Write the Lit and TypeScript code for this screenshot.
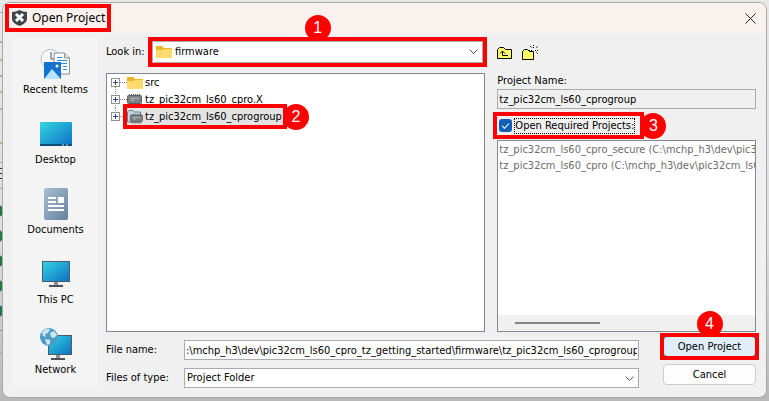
import { LitElement, html, css, svg } from "lit";
import { customElement } from "lit/decorators.js";

const folder = html`<svg class="ic16" viewBox="0 0 16 14"><path d="M0 2Q0 1 1 1H6L8 3H15Q16 3 16 4V6H0Z" fill="#f0b323"/><path d="M0 5H6L8 4H16V12Q16 13 15 13H1Q0 13 0 12Z" fill="#ffdb6e"/></svg>`;
const chipShape = svg`<path d="M2.500 1V3M4.500 1V3M6.500 1V3M8.500 1V3M10.500 1V3M12.500 1V3M2.500 10V13M4.500 10V13M6.500 10V13M8.500 10V13M10.500 10V13M12.500 10V13" stroke="#6a6a6a" stroke-width="1"/><rect x="0.5" y="2.500" width="14" height="8" rx="1" fill="#7d8082" stroke="#5c5f61"/><path d="M3 5.500H12M4 7.500H7" stroke="#b5b8ba"/>`;
const chip = html`<svg class="ic16" viewBox="0 0 16 14">${chipShape}</svg>`;
const group = html`<svg class="ic16" viewBox="0 0 16 14"><path d="M.5 12V2L2 .5H6L7 2H13.500V12Z" fill="#c3d7e4" stroke="#667f91"/><g transform="translate(3 3) scale(.86 .82)">${chipShape}</g></svg>`;
const screen = svg`<defs><linearGradient id="g" x2="1" y2="1"><stop stop-color="#35d5e2"/><stop offset="1" stop-color="#0c6fc5"/></linearGradient></defs>`;

const places = [
  { name: "Recent Items", icon: html`<svg class="place-icon" viewBox="0 0 32 32"><circle cx="10.500" cy="11" r="9.500" fill="#f7f7f7" stroke="#b9bec2"/><path d="M11 4V11H17" fill="none" stroke="#555"/><path d="M14 5H24.500L29.500 10V26H14Z" fill="#fafafa" stroke="#8b9197"/><path d="M24.500 5V10H29.500" fill="#ddd" stroke="#8b9197"/><path d="M17 9.500H22M17 12.500H27M21 15.500H27M23 18.500H27M23 21.500H27" stroke="#2f8ed5"/><path d="M4 14H21V31H4Z" fill="#1473cf"/><path d="M4 31L12 21L21 31Z" fill="#b9e3fc"/><circle cx="17" cy="18" r="1.500" fill="#fff"/></svg>` },
  { name: "Desktop", icon: html`<svg class="place-icon" viewBox="0 0 32 32">${screen}<rect y="4" width="32" height="24" rx="1" fill="url(#g)"/><path d="M0 26H32V27Q32 28 31 28H1Q0 28 0 27Z" fill="#0c4c78"/><path d="M22 27H24M26 27H28" stroke="#c5e7f5"/></svg>` },
  { name: "Documents", icon: html`<svg class="place-icon" viewBox="0 0 32 32"><defs><linearGradient id="d" x2="1" y2="1"><stop stop-color="#a9bfd4"/><stop offset="1" stop-color="#6382a0"/></linearGradient></defs><rect x="4" width="24" height="32" rx="2" fill="url(#d)"/><path d="M8 10H16M8 14H16M8 18H24M8 22H24" stroke="#fff" stroke-width="2"/><path d="M18 9H24V15H18Z" fill="#fff"/></svg>` },
  { name: "This PC", icon: html`<svg class="place-icon" viewBox="0 0 32 32">${screen}<rect x="2.500" y="3.500" width="27" height="20" fill="url(#g)" stroke="#4c5b66"/><path d="M14 24H18V28H14Z" fill="#8a9197"/><path d="M9 28H23" stroke="#4c5358" stroke-width="2"/></svg>` },
  { name: "Network", icon: html`<svg class="place-icon" viewBox="0 0 32 32">${screen}<rect x="8.500" y="7.500" width="23" height="19" fill="url(#g)" stroke="#4c5b66"/><path d="M16 27H20V30H16Z" fill="#8a9197"/><path d="M11 31H25" stroke="#4c5358" stroke-width="2"/><circle cx="9" cy="9" r="9" fill="#4b9cc6"/><path d="M2 4Q6 0 10 1L8 5L5 6L6 9L3 8ZM10 5L14 3L17 7L14 10L11 9ZM5 11L10 12L10 16L7 17Z" fill="#cfe5ef"/></svg>` },
];

@customElement("app-root")
export class AppRoot extends LitElement {
  static styles = css`
    :host { display: flex; min-height: 100vh; box-sizing: border-box; padding: 2px 2px 3px; position: relative; overflow: hidden; background: linear-gradient(#e8e8e8, #dedede 60%, #b8b8b8); color: #000; font: 11px/14px "DejaVu Sans Condensed", "Noto Sans", sans-serif; }
    * { box-sizing: border-box; }
    svg { display: block; flex: none; }
    button, input, select { font: inherit; color: inherit; margin: 0; }
    .backdrop { position: absolute; inset: 0; width: 100%; height: 100%; }
    .dialog { position: relative; flex: 1; min-width: 0; display: flex; flex-direction: column; border: 1px solid #a9a9a9; border-radius: 8px; background: #f0f0f0; }
    .title { display: flex; justify-content: space-between; align-items: center; height: 30px; padding: 0 10px 0 6px; background: #f9f1ee; border-radius: 8px 8px 0 0; }
    .brand { position: relative; display: flex; align-items: center; gap: 4px; height: 20px; padding: 0 2px; }
    h1 { margin: 0; font: 12px/16px "Noto Sans", sans-serif; }
    .close { border: 0; padding: 0; background: none; }
    .body { flex: 1; display: flex; gap: 8px; padding: 4px 10px 9px; min-width: 0; }
    .places { flex: none; width: 85px; background: #f4f4f4; padding-top: 11px; display: flex; flex-direction: column; gap: 16px; }
    .place { border: 0; padding: 0; background: none; display: flex; flex-direction: column; align-items: center; gap: 3px; height: 54px; }
    .place-icon { width: 32px; height: 32px; }
    .main { flex: 1; min-width: 0; display: flex; flex-direction: column; gap: 4px; }
    .top { flex: 1; display: grid; grid-template-columns: minmax(0, 22fr) minmax(0, 15fr); gap: 12px; }
    .left, .right { display: flex; flex-direction: column; min-width: 0; }
    .look { display: flex; align-items: center; height: 30px; margin-bottom: 6px; padding-right: 2px; }
    .look label { width: 46px; }
    .combo { position: relative; flex: 1; display: flex; min-width: 0; }
    select { appearance: none; width: 100%; height: 22px; border: 1px solid #a9abb0; border-radius: 0; background: #fff; padding: 0 2px; }
    .look select { padding-left: 22px; }
    .combo .ic16, .chev { position: absolute; }
    .combo .ic16 { left: 4px; top: 4px; }
    .chev { right: 5px; top: 8px; }
    .ic16 { width: 16px; height: 14px; }
    .mark { position: absolute; inset: -4px; border: 4px solid #f00; pointer-events: none; }
    .num { position: absolute; width: 26px; height: 26px; border-radius: 50%; background: #f00; color: #fff; display: grid; place-items: center; font: 16px/20px "Liberation Sans", sans-serif; }
    .above { left: 50%; bottom: 100%; margin-left: -13px; }
    .after { left: 100%; top: 50%; margin-top: -13px; }
    .tree { flex: 1; margin: 0; list-style: none; border: 1px solid #828790; background: #fff; padding: 0 4px; }
    .node { display: flex; align-items: center; height: 17px; }
    .item { position: relative; display: flex; align-items: center; gap: 2px; height: 17px; padding-right: 1px; }
    .selected { background: #e3e3e3; }
    .tools { display: flex; gap: 9px; align-items: center; height: 32px; margin-bottom: 5px; }
    .tools button { border: 0; padding: 0; background: none; }
    .field { height: 20px; border: 1px solid #a9abb0; background: #fff; padding: 0 1px; min-width: 0; border-radius: 0; }
    .name { width: 100%; background: #f0f0f0; margin: 1px 0 7px; }
    .check { position: relative; align-self: flex-start; display: flex; align-items: center; gap: 3px; height: 19px; padding: 0 6px 0 2px; margin-bottom: 5px; }
    .check input { appearance: none; width: 13px; height: 13px; border-radius: 3px; background: #0f5fb8; display: grid; place-items: center; }
    .check input::after { content: ""; width: 6px; height: 3px; border: solid #fff; border-width: 0 0 1px 1px; transform: rotate(-45deg); margin-top: -2px; }
    .check label { outline: 1px dotted #000; }
    .required { flex: 1; display: flex; flex-direction: column; border: 1px solid #828790; background: #fff; overflow: hidden; color: #6d6d6d; white-space: nowrap; }
    .required ul { flex: 1; list-style: none; margin: 0; padding: 1px; line-height: 16px; }
    .track { height: 16px; background: #f0f0f0; padding: 7px 17px; }
    .thumb { width: 38%; height: 2px; background: #858585; }
    .bottom { display: grid; grid-template-columns: 78px minmax(0, 1fr) 93px; grid-auto-rows: 24px; row-gap: 4px; align-items: end; }
    .bottom label { line-height: 20px; }
    .bottom .combo, .bottom .field { margin-right: 24px; }
    .bottom select { height: 20px; }
    .push { position: relative; align-self: start; height: 21px; border: 1px solid #ccc; border-radius: 4px; background: #fdfdfd; padding: 0; }
    .primary { background: #e0eef9; border-color: #0078d4; }
  `;

  render() {
    const chev = html`<svg class="chev" width="9" height="6" viewBox="0 0 9 6"><path d="M.5 .5L4.500 4.500L8.500 .5" fill="none" stroke="#555"/></svg>`;
    return html`
      <svg class="backdrop" aria-hidden="true"><path d="M0 12.500H4M0 162.500H4M0 188.500H4" stroke="#aaa"/><path d="M0 168.500H3M0 173.500H3M0 178.500H3" stroke="#333"/><path d="M0 330.500H4M0 353.500H4" stroke="#7f9db9"/><path d="M0 42H2M0 76H2M0 109H2" stroke="#777"/><path d="M0 60H2M0 92H2M0 143H2" stroke="#b87a3a"/>${[211, 236, 261, 286, 311].map((y) => svg`<circle cx="-3" cy=${y} r="6" fill="#188038" stroke="#24486b"/>`)}</svg>
      <main class="dialog">
        <header class="title">
          <div class="brand"><svg width="17" height="16" viewBox="0 0 17 16"><path d="M1 2Q5 2 8.500 0Q12 2 16 2V9Q16 13 8.500 16Q1 13 1 9Z" fill="#3d464d"/><path d="M5 4L12 11M12 4L5 11" stroke="#fff" stroke-width="3"/></svg><h1>Open Project</h1><span class="mark"></span></div>
          <button class="close" aria-label="Close"><svg width="11" height="11" viewBox="0 0 11 11"><path d="M.5 .5L10.500 10.500M10.500 .5L.5 10.500" stroke="#222"/></svg></button>
        </header>
        <div class="body">
          <nav class="places">${places.map((p) => html`<button class="place">${p.icon}<span>${p.name}</span></button>`)}</nav>
          <div class="main">
            <div class="top">
              <section class="left">
                <div class="look"><label for="look">Look in:</label><div class="combo"><select id="look"><option>firmware</option></select>${folder}${chev}<span class="mark"><span class="num above">1</span></span></div></div>
                <ul class="tree">
                  ${[["src", folder], ["tz_pic32cm_ls60_cpro.X", chip], ["tz_pic32cm_ls60_cprogroup", group]].map(([t, i], n) => html`<li class="node"><svg width="16" height="17" viewBox="0 0 16 17"><path d="${["M4.500 13V17", "M4.500 0V17", "M4.500 0V4"][n]}M9 8.500H16" stroke="#888" stroke-dasharray="1 1"/><rect x=".5" y="4.500" width="8" height="8" fill="#fff" stroke="#919191"/><path d="M2 8.500H7M4.500 6V11" stroke="#27468f"/></svg><span class="item ${n === 2 ? "selected" : ""}">${i}<span>${t}</span>${n === 2 ? html`<span class="mark"><span class="num after">2</span></span>` : ""}</span></li>`)}
                </ul>
              </section>
              <section class="right">
                <div class="tools"><button aria-label="Up one level"><svg width="16" height="14" viewBox="0 0 16 14"><path d="M.5 12.500V3.500L2.500 1.500H6.500L8.500 3.500H14.500V12.500Z" fill="#ffff66" stroke="#000"/><path d="M5.500 5V9.500H11M3 7.500L5.500 5L8 7.500" fill="none" stroke="#000"/></svg></button><button aria-label="New folder"><svg width="16" height="16" viewBox="0 0 16 16"><path d="M.5 14.500V6.500L2.500 4.500H5.500L7.500 6.500H11.500V14.500Z" fill="#ffff66" stroke="#000"/><path d="M11.500 0V3M11.500 7V10M7 5.500H10M13 5.500H16M8 1L10 3M14 3L16 1M14 7L16 9" stroke="#000" stroke-dasharray="1 1"/></svg></button></div>
                <label for="pname">Project Name:</label>
                <input id="pname" class="field name" readonly value="tz_pic32cm_ls60_cprogroup">
                <div class="check"><input id="req" type="checkbox" checked><label for="req">Open Required Projects:</label><span class="mark"><span class="num after">3</span></span></div>
                <div class="required"><ul><li>tz_pic32cm_ls60_cpro_secure (C:\\mchp_h3\\dev\\pic32cm_ls60_cpro)</li><li>tz_pic32cm_ls60_cpro (C:\\mchp_h3\\dev\\pic32cm_ls60_cpro)</li></ul><div class="track"><div class="thumb"></div></div></div>
              </section>
            </div>
            <div class="bottom">
              <label for="fname">File name:</label><input id="fname" class="field" value=":\\mchp_h3\\dev\\pic32cm_ls60_cpro_tz_getting_started\\firmware\\tz_pic32cm_ls60_cprogroup"><button class="push primary">Open Project<span class="mark"><span class="num above">4</span></span></button>
              <label for="ftype">Files of type:</label><div class="combo"><select id="ftype"><option>Project Folder</option></select>${chev}</div><button class="push">Cancel</button>
            </div>
          </div>
        </div>
      </main>`;
  }
}
